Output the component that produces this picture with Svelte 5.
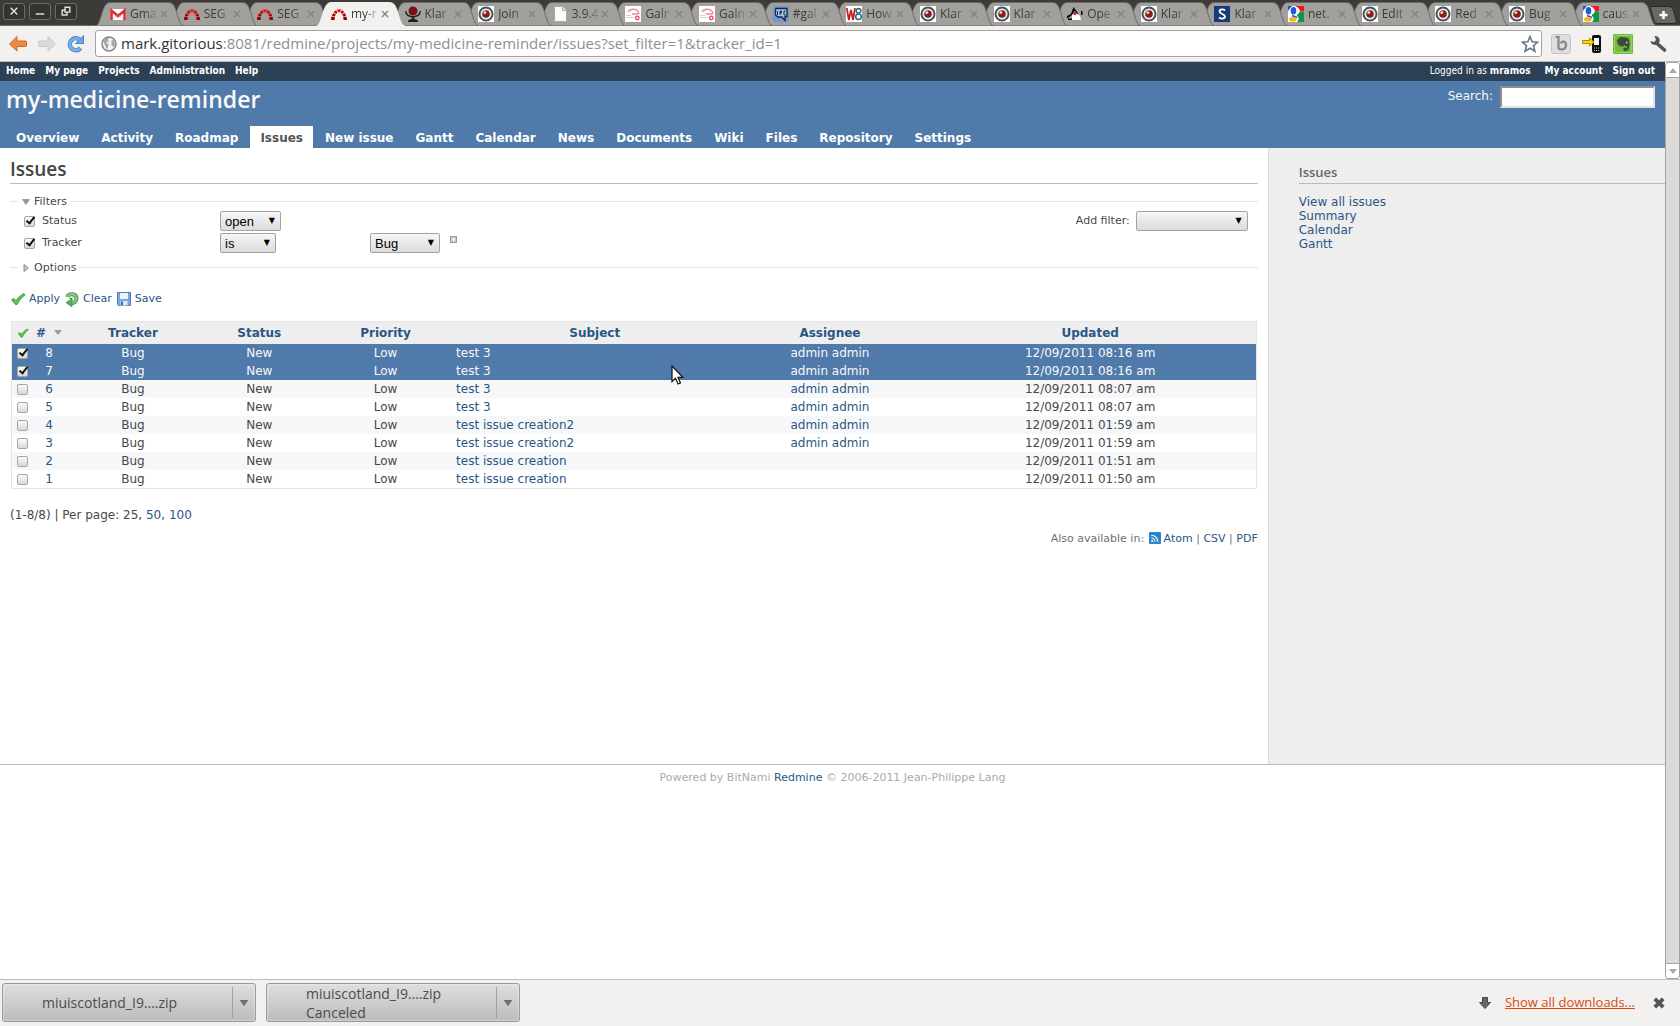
<script lang="ts">
	const tabs = [
		{ icon: 'gmail', title: 'Gma' },
		{ icon: 'redmine', title: 'SEG' },
		{ icon: 'redmine', title: 'SEG' },
		{ icon: 'redmine', title: 'my-r', active: true },
		{ icon: 'bowl', title: 'Klar' },
		{ icon: 'eye', title: 'Join' },
		{ icon: 'page', title: '3.9.4' },
		{ icon: 'galn', title: 'Galr' },
		{ icon: 'galn', title: 'Galn' },
		{ icon: 'irc', title: '#gal' },
		{ icon: 'w8', title: 'How' },
		{ icon: 'eye', title: 'Klar' },
		{ icon: 'eye', title: 'Klar' },
		{ icon: 'duke', title: 'Ope' },
		{ icon: 'eye', title: 'Klar' },
		{ icon: 'letter', title: 'Klar' },
		{ icon: 'google', title: 'net.' },
		{ icon: 'eye', title: 'Edit' },
		{ icon: 'eye', title: 'Red' },
		{ icon: 'eye', title: 'Bug' },
		{ icon: 'google', title: 'caus' }
	];

	const topMenu = ['Home', 'My page', 'Projects', 'Administration', 'Help'];
	const mainMenu = [
		'Overview', 'Activity', 'Roadmap', 'Issues', 'New issue', 'Gantt', 'Calendar',
		'News', 'Documents', 'Wiki', 'Files', 'Repository', 'Settings'
	];
	const sidebarLinks = ['View all issues', 'Summary', 'Calendar', 'Gantt'];
	const columns = ['Tracker', 'Status', 'Priority', 'Subject', 'Assignee', 'Updated'];

	let issues = $state([
		{ id: 8, subject: 'test 3', assignee: 'admin admin', updated: '12/09/2011 08:16 am', selected: true },
		{ id: 7, subject: 'test 3', assignee: 'admin admin', updated: '12/09/2011 08:16 am', selected: true },
		{ id: 6, subject: 'test 3', assignee: 'admin admin', updated: '12/09/2011 08:07 am', selected: false },
		{ id: 5, subject: 'test 3', assignee: 'admin admin', updated: '12/09/2011 08:07 am', selected: false },
		{ id: 4, subject: 'test issue creation2', assignee: 'admin admin', updated: '12/09/2011 01:59 am', selected: false },
		{ id: 3, subject: 'test issue creation2', assignee: 'admin admin', updated: '12/09/2011 01:59 am', selected: false },
		{ id: 2, subject: 'test issue creation', assignee: '', updated: '12/09/2011 01:51 am', selected: false },
		{ id: 1, subject: 'test issue creation', assignee: '', updated: '12/09/2011 01:50 am', selected: false }
	]);

	let statusOn = $state(true);
	let trackerOn = $state(true);
</script>

{#snippet favicon(name: string)}
	<svg class="favicon" viewBox="0 0 16 16" aria-hidden="true">
		{#if name === 'gmail'}
			<rect y="3" width="16" height="11" rx="1" fill="#fff" />
			<path d="M1.500 14V4.500L8 10l6.500-5.500V14" fill="none" stroke="#d93030" stroke-width="2.600" />
			<path d="M3 13.500l3.500-4M13 13.500l-3.500-4" stroke="#ddb0b0" stroke-width="0.800" />
		{:else if name === 'redmine'}
			<path d="M0.300 10.800h3.400V14H0zM12.300 10.800h3.400L16 14h-3.500z" fill="#9c0000" />
			<path d="M0.800 10l1.400-3 2.600 1.600L3.900 10.300zM15.200 10l-1.400-3-2.600 1.600.9 1.700z" fill="#b80000" />
			<path d="M2.700 6.200L5 4l1.400 2.600-1.200 1.300zM13.300 6.200L11 4 9.600 6.600l1.200 1.300z" fill="#d40000" />
			<path d="M5.800 3.600h4.400L9 6.200H7z" fill="#ec1010" />
		{:else if name === 'bowl'}
			<circle cx="8" cy="5" r="4.500" fill="#7c1010" />
			<path d="M0 4.500c0 5 4 7 8 7s8-2 8-7l-1.500 1C14 8.500 11 10 8 10S2 8.500 1.500 5.500z" fill="#222" />
			<path d="M7 11h2v1.500l4 2V16H3v-1.500l4-2z" fill="#222" />
		{:else if name === 'eye'}
			<rect width="16" height="16" fill="#fff" />
			<circle cx="8" cy="8" r="6.500" fill="#eef0f0" stroke="#44545c" stroke-width="2" />
			<circle cx="8" cy="8" r="3.800" fill="#8a1c1c" />
			<circle cx="6.800" cy="6.500" r="1.500" fill="#e8caca" />
		{:else if name === 'page'}
			<path d="M2.500 0.500h8l4 4v11h-12z" fill="#fbfbfb" stroke="#aaa" />
			<path d="M10.500 0.500v4h4" fill="#ddd" stroke="#aaa" />
		{:else if name === 'galn'}
			<rect width="16" height="16" fill="#fff" />
			<path d="M3 6C5 2.500 11 2 13.500 6c1 2-1 2-2.500 2H7" fill="none" stroke="#f28a96" stroke-width="1.400" />
			<path d="M1 11.500h8M1 9.500h5" stroke="#d5d5d5" />
			<circle cx="12.300" cy="12" r="1.700" fill="#fff" stroke="#ec5068" stroke-width="1.400" />
		{:else if name === 'irc'}
			<rect width="16" height="16" rx="3" fill="#6f98d4" />
			<path d="M3 2.500h11v8h-2v4L9 11H5L2.500 9V4z" fill="#adc6e8" stroke="#16263c" stroke-width="1.300" />
			<path d="M4.500 5v4M7 9V5h1.500v2H7M12.500 5H11v4h1.500" fill="none" stroke="#16263c" />
		{:else if name === 'w8'}
			<rect width="16" height="16" fill="#fff" />
			<path d="M0.800 2l2 12L5 4l2 10L9 2" fill="none" stroke="#c81818" stroke-width="1.700" />
			<circle cx="12.500" cy="4.800" r="2.300" fill="none" stroke="#227080" stroke-width="1.500" />
			<circle cx="12.500" cy="10.800" r="2.800" fill="none" stroke="#227080" stroke-width="1.500" />
		{:else if name === 'duke'}
			<path d="M7 2l6 8 1 4H5V9z" fill="#fff" />
			<path d="M6.500 1L12 8.500l-2-1L7.500 5 5 9l-4 3H0v-2l4-2zM1 12.500h4v1.500H1zM14 4.500l1.500 1V9H14z" fill="#000" />
			<circle cx="8" cy="7.500" r="1.700" fill="#d02020" />
		{:else if name === 'letter'}
			<rect width="16" height="16" fill="#173a78" />
			<path d="M11 4.500C9.500 3 5.500 3 5.500 5.500S11 8 11 10.500 7 13 5 11.500" fill="none" stroke="#fff" stroke-width="1.800" />
		{:else if name === 'google'}
			<rect width="16" height="16" fill="#fff" />
			<path d="M7 0h9v5.500h-4C12 3 10 1 7 0z" fill="#f01818" />
			<path d="M9 8.500c2-.5 2.500-2 2.500-3H16V16H9c2-2 2.500-4 0-6z" fill="#0c9646" />
			<path d="M0 0h4L1.500 3 0 5z" fill="#2058d0" />
			<ellipse cx="5.500" cy="4.800" rx="2.800" ry="3.800" fill="#2058d0" />
			<path d="M4 9.500l5 2" stroke="#2058d0" stroke-width="1.600" />
			<ellipse cx="4.800" cy="13.300" rx="3.800" ry="2.300" fill="#f8b418" />
		{/if}
	</svg>
{/snippet}

{#snippet tick()}
	<svg class="tick" viewBox="0 0 16 16" aria-hidden="true">
		<path d="M1.500 8.800L4 7.500l2 2.300C8 6.500 10.500 4.500 14 2.500l1 1.300C11.500 6.500 9 10 7 13.500H5.500z" fill="#5dc552" stroke="#37933a" stroke-width="0.900" />
	</svg>
{/snippet}

<div class="window">
	<header class="tabstrip">
		<div class="controls">
			<button aria-label="Close window"><svg viewBox="0 0 21 15"><path d="M7 4l7 7M14 4l-7 7" /></svg></button>
			<button aria-label="Minimize window"><svg viewBox="0 0 21 15"><path d="M6 10.500h9" stroke-width="2" /></svg></button>
			<button aria-label="Restore window"><svg viewBox="0 0 21 15"><path d="M9.500 3.500h5v5h-5zM9 6.500H6.500v5h5V9" /></svg></button>
		</div>
		<div class="tabs">
			{#each tabs as tab, i}
				<div class="tab" class:active={tab.active} style="z-index: {tab.active ? 30 : 21 - i}">
					<svg class="shape" viewBox="0 0 88 24" preserveAspectRatio="none" aria-hidden="true">
						<path d="M0 24C5 22 6 3 12 1Q13 0.500 15 0.500H73Q76 0.500 78 3C82 10 83 23 88 24z" />
					</svg>
					{@render favicon(tab.icon)}
					<span class="title">{tab.title}</span>
					<button class="close" aria-label="Close tab"><svg viewBox="0 0 8 8"><path d="M1 1l6 6M7 1L1 7" /></svg></button>
				</div>
			{/each}
		</div>
		<button class="newtab" aria-label="New tab">
			<svg viewBox="0 0 28 18" aria-hidden="true">
				<path d="M1 0.500H20Q23 0.500 24 3L27.500 15Q27.500 17.500 25 17.500H9Q6 17.500 5 15z" fill="#6a6964" stroke="#2b2a27" />
				<path d="M14.500 5v8M10.500 9h8" stroke="#fff" stroke-width="2.600" />
			</svg>
		</button>
	</header>

	<div class="toolbar">
		<button class="nav" aria-label="Back">
			<svg viewBox="0 0 20 20"><path d="M1.500 10L9 2.500V7h8.500q1 0 1 1v3.500q0 1-1 1H9V17z" fill="#f08a42" stroke="#cf6a25" /></svg>
		</button>
		<button class="nav" aria-label="Forward">
			<svg viewBox="0 0 20 20"><path d="M18.500 10L11 2.500V7H2.500q-1 0-1 1v3.500q0 1 1 1H11V17z" fill="#dcdad8" stroke="#cbc9c6" /></svg>
		</button>
		<button class="nav" aria-label="Reload">
			<svg viewBox="0 0 20 20"><path d="M14.500 14a6 6 0 1 1-1-8.500" fill="none" stroke="#4b86c6" stroke-width="4.500" /><path d="M17.500 1.500v8H9.500z" fill="#6fa8e2" stroke="#4b86c6" /><path d="M14.500 14a6 6 0 1 1-1-8.500" fill="none" stroke="#78aee5" stroke-width="2.800" /></svg>
		</button>
		<div class="omnibox">
			<svg class="globe" viewBox="0 0 16 16" aria-hidden="true">
				<circle cx="8" cy="8" r="7" fill="#f3f3f3" stroke="#858585" stroke-width="1.500" />
				<path d="M2 5.500c1.500-3 4-4 6-3.500L7 4l1 1.500-3 1 2.500 2L7 11l-.5 2.500C5 12.500 5 10.500 4 9zM10.500 4.500l2.500-.5 1 4-1.500 3.500-2-2.500z" fill="#a6a6a6" />
			</svg>
			<span class="url">mark.gitorious<span>:8081/redmine/projects/my-medicine-reminder/issues?set_filter=1&amp;tracker_id=1</span></span>
			<svg class="star" viewBox="0 0 18 18" aria-hidden="true">
				<path d="M9 1.500l2.200 5.200 5.500.4-4.200 3.600 1.400 5.500L9 13.200l-4.900 3 1.400-5.500L1.300 7.100l5.500-.4z" fill="#fff" stroke="#68728c" stroke-width="1.600" />
			</svg>
		</div>
		<div class="extensions">
			<button aria-label="Bitly">
				<svg viewBox="0 0 20 20"><rect x="0.500" y="0.500" width="19" height="19" rx="2" fill="#dedede" stroke="#c4c4c4" /><path d="M4.500 3h3v10q0 2.500 2.500 2.500c3.500 0 5-2 5-4.500 0-2-1-3.500-3-3.500L9.500 9" fill="none" stroke="#858585" stroke-width="2.200" /></svg>
			</button>
			<button aria-label="Send to phone">
				<svg viewBox="0 0 20 20"><rect x="10" y="1" width="9" height="18" rx="2" fill="#111" /><rect x="12" y="4" width="5" height="7" fill="#fff" /><path d="M12 14h5M12 16.500h5" stroke="#bbb" stroke-dasharray="1" /><path d="M0.500 6.500h7V4l4.500 4-4.500 4V9.500h-7z" fill="#ffd900" stroke="#ad8e00" /></svg>
			</button>
			<button aria-label="Evernote">
				<svg viewBox="0 0 20 20"><rect width="20" height="20" rx="1" fill="#6dbd3a" /><rect x="1.500" y="1.500" width="17" height="17" fill="none" stroke="#97d56c" /><path d="M4 6l3.500-3 4.500.5c3 0 4 1 4.500 4.500 0 5-.5 9-4 9-2.500 0-3-3.500-.5-3.500.5 0 1 .3 1 .8l1-.3c0-1.500-.5-2-1.500-2l-1-1c-.5 1-1.500 1.500-3 1.500C5.500 12.500 4 9.500 4 6z" fill="#3e4a3a" /><circle cx="13.800" cy="8.500" r="0.900" fill="#c5dbb6" /></svg>
			</button>
			<button aria-label="Settings">
				<svg viewBox="0 0 20 20"><path d="M9 9.500l7.500 6.500" stroke="#555" stroke-width="3.600" stroke-linecap="round" /><path d="M6.500 2c4-.5 6 3 5 6l-3 3c-3 .5-6-1-6-4l3.500 1 2-2z" fill="#555" /></svg>
			</button>
		</div>
	</div>

	<div class="viewport">
		<div class="page">
			<nav class="top-menu">
				<div>{#each topMenu as item}<a href="#top">{item}</a>{/each}</div>
				<div class="account">
					<span>Logged in as <a href="#user">mramos</a></span>
					<a href="#account">My account</a>
					<a href="#signout">Sign out</a>
				</div>
			</nav>

			<div class="header">
				<div class="project">
					<h1>my-medicine-reminder</h1>
					<form class="search">
						<label for="q">Search:</label>
						<input id="q" type="text" />
					</form>
				</div>
				<nav class="main-menu">
					{#each mainMenu as item}
						<a href="#menu" class:selected={item === 'Issues'}>{item}</a>
					{/each}
				</nav>
			</div>

			<div class="main">
				<main class="content">
					<h2>Issues</h2>
					<fieldset>
						<legend>
							<svg viewBox="0 0 8 8"><path d="M0.500 1.500h7L4 6.500z" fill="#999" stroke="#777" stroke-width="0.500" /></svg>Filters
						</legend>
						<div class="filters">
							<div class="filter-list">
								<div class="filter">
									<label class="field"><input type="checkbox" bind:checked={statusOn} />Status</label>
									<span class="select op-open"><select aria-label="Status operator"><option>open</option></select></span>
								</div>
								<div class="filter">
									<label class="field"><input type="checkbox" bind:checked={trackerOn} />Tracker</label>
									<span class="operator"><span class="select op-is"><select aria-label="Tracker operator"><option>is</option></select></span></span>
									<span class="select value"><select aria-label="Tracker value"><option>Bug</option></select></span>
									<button type="button" class="expand" aria-label="Multiple values">
										<svg viewBox="0 0 7 7"><rect x="0.500" y="0.500" width="6" height="6" fill="#ccc" stroke="#999" /><path d="M3.500 2v3M2 3.500h3" stroke="#fff" /></svg>
									</button>
								</div>
							</div>
							<div class="add-filter">
								<label for="add">Add filter:</label>
								<span class="select add"><select id="add"><option></option></select></span>
							</div>
						</div>
					</fieldset>
					<fieldset class="options">
						<legend>
							<svg viewBox="0 0 8 8"><path d="M2 0.500v7L6.500 4z" fill="#ccc" stroke="#777" stroke-width="0.800" /></svg>Options
						</legend>
					</fieldset>

					<p class="buttons">
						<a href="#apply">{@render tick()}Apply</a>
						<a href="#clear">
							<svg viewBox="0 0 16 16"><path d="M3.500 6C4 2 12.500 2 12.500 7.500c0 3-2.500 4.500-5 4.500" fill="none" stroke="#3f9346" stroke-width="4" /><path d="M3.500 6C4 2 12.500 2 12.500 7.500c0 3-2.500 4.500-5 4.500" fill="none" stroke="#86c886" stroke-width="2.400" /><path d="M2 11.500l6-3.500v8z" fill="#5baa5d" stroke="#3f9346" stroke-width="0.800" /><path d="M5.500 7.500h3" stroke="#3f9346" stroke-width="1.500" /></svg>Clear
						</a>
						<a href="#save">
							<svg viewBox="0 0 16 16"><path d="M1.500 1.500h13v13h-12l-1-1z" fill="#7aa7dd" stroke="#4a7ab8" /><path d="M4 2h8v6H4z" fill="#eef4fb" /><path d="M4.500 10h7v4.500h-7z" fill="#dce6f2" /><path d="M6 10.500v3.500" stroke="#3f6ca8" stroke-width="2" /></svg>Save
						</a>
					</p>

					<table>
						<colgroup>
							<col class="c-check" /><col class="c-id" /><col class="c-tracker" /><col class="c-status" />
							<col class="c-tracker" /><col class="c-subject" /><col class="c-assignee" /><col />
						</colgroup>
						<thead>
							<tr>
								<th>{@render tick()}</th>
								<th class="id"><a href="#sort">#</a><svg viewBox="0 0 8 5"><path d="M0 0h8L4 5z" fill="#999" /></svg></th>
								{#each columns as column}
									<th><a href="#sort">{column}</a></th>
								{/each}
							</tr>
						</thead>
						<tbody>
							{#each issues as issue (issue.id)}
								<tr class:marked={issue.selected}>
									<td class="check"><input type="checkbox" bind:checked={issue.selected} aria-label="Issue {issue.id}" /></td>
									<td><a href="#issue">{issue.id}</a></td>
									<td>Bug</td>
									<td>New</td>
									<td>Low</td>
									<td class="subject">
										<a href="#issue">{issue.subject}</a>
										{#if issue.id === 7}
											<svg class="pointer" viewBox="0 0 13 20" aria-hidden="true"><path d="M1 1v15.500l3.500-3.300 2.600 5.800 2.400-1.100-2.500-5.500h4.800z" fill="#fff" stroke="#111" stroke-width="1.200" /></svg>
										{/if}
									</td>
									<td><a href="#user">{issue.assignee}</a></td>
									<td>{issue.updated}</td>
								</tr>
							{/each}
						</tbody>
					</table>

					<p class="pagination">(1-8/8) | Per page: 25, <a href="#50">50</a>, <a href="#100">100</a></p>
					<p class="other-formats">
						Also available in:
						<a href="#atom" class="atom"><svg viewBox="0 0 13 13"><rect width="13" height="13" rx="1" fill="#2a86c8" /><path d="M2.500 6.500a4 4 0 0 1 4 4M2.500 3.500a7 7 0 0 1 7 7" fill="none" stroke="#fff" stroke-width="1.300" /><circle cx="3.500" cy="9.800" r="1.100" fill="#fff" /></svg>Atom</a>
						| <a href="#csv">CSV</a> | <a href="#pdf">PDF</a>
					</p>
				</main>
				<aside class="sidebar">
					<h3>Issues</h3>
					{#each sidebarLinks as link}
						<a href="#side">{link}</a>
					{/each}
				</aside>
			</div>

			<footer>Powered by BitNami <a href="#redmine">Redmine</a> © 2006-2011 Jean-Philippe Lang</footer>
		</div>
		<div class="scrollbar">
			<div class="arrow"><svg viewBox="0 0 8 5"><path d="M4 0l4 5H0z" fill="#aaa" /></svg></div>
			<div class="thumb"></div>
			<div class="arrow"><svg viewBox="0 0 8 5"><path d="M0 0h8L4 5z" fill="#aaa" /></svg></div>
		</div>
	</div>

	<div class="downloads">
		<div class="download">
			<button class="file">miuiscotland_I9….zip</button>
			<button class="more" aria-label="Download options"><svg viewBox="0 0 8 6"><path d="M0.500 0.500h7L4 5.500z" fill="#777" stroke="#666" /></svg></button>
		</div>
		<div class="download">
			<button class="file">miuiscotland_I9….zip<br />Canceled</button>
			<button class="more" aria-label="Download options"><svg viewBox="0 0 8 6"><path d="M0.500 0.500h7L4 5.500z" fill="#777" stroke="#666" /></svg></button>
		</div>
		<div class="show-all">
			<svg viewBox="0 0 12 12" aria-hidden="true"><path d="M3.500 0.500h5v5h3L6 11.500 0.500 5.500h3z" fill="#666" stroke="#444" /></svg>
			<a href="#downloads">Show all downloads...</a>
			<button aria-label="Close downloads bar"><svg viewBox="0 0 12 12"><path d="M1.800 1.800l8.400 8.400M10.200 1.800l-8.400 8.400" stroke="#555" stroke-width="3.800" /></svg></button>
		</div>
	</div>
</div>

<style>
	:global(body) {
		margin: 0;
		overflow: hidden;
	}

	.window {
		display: flex;
		flex-direction: column;
		height: 100vh;
		font-family: "DejaVu Sans", Verdana, sans-serif;
		font-size: 12px;
		color: #484848;
		background: #fff;
	}

	button {
		padding: 0;
		border: 0;
		background: none;
		font: inherit;
		color: inherit;
	}

	svg {
		display: block;
		flex: none;
	}

	a {
		color: #2a5685;
		text-decoration: none;
	}

	/* Browser tabs */
	.tabstrip {
		display: flex;
		flex: none;
		height: 26px;
		background: #3c3b37;
		box-shadow: inset 0 -1px #6b6a66;
	}

	.controls {
		display: flex;
		gap: 4px;
		width: 100px;
		padding: 3px 0 0 3px;
		box-sizing: border-box;
	}

	.controls button {
		box-sizing: border-box;
		width: 22px;
		height: 17px;
		border: 1px solid #6d6b66;
		border-radius: 3px;
		background: #34332f;
	}

	.controls path {
		fill: none;
		stroke: #e2e0dc;
		stroke-width: 1.5;
	}

	.tabs {
		display: flex;
		flex: 1;
		padding: 2px 0 0 3px;
	}

	.tab {
		position: relative;
		display: flex;
		flex: 1 1 0;
		align-items: center;
		min-width: 0;
		padding: 0 9px 0 7px;
		font-family: "Open Sans", "Noto Sans", sans-serif;
		font-size: 12px;
		line-height: 20px;
		color: #3c3b37;
	}

	.shape {
		position: absolute;
		top: 0;
		left: -7px;
		width: calc(100% + 14px);
		height: 24px;
		z-index: -1;
	}

	.shape path {
		fill: #a1a09d;
		stroke: #6b6a66;
	}

	.active .shape path {
		fill: #f2f1f0;
		stroke: #f2f1f0;
	}

	.favicon {
		width: 16px;
		height: 16px;
	}

	.title {
		flex: 1;
		margin-left: 4px;
		white-space: nowrap;
		mask-image: linear-gradient(to right, #000 45%, transparent 100%);
	}

	.close svg {
		width: 8px;
		height: 8px;
	}

	.close path {
		stroke: #83827f;
		stroke-width: 1.3;
	}

	.newtab {
		width: 31px;
		padding-top: 4px;
	}

	.newtab svg {
		width: 28px;
		height: 18px;
	}

	/* Browser toolbar */
	.toolbar {
		display: flex;
		flex: none;
		align-items: center;
		box-sizing: border-box;
		height: 36px;
		padding: 0 12px 0 8px;
		border-bottom: 1px solid #bdbcba;
		background: #f2f1f0;
	}

	.nav {
		width: 29px;
	}

	.nav svg {
		width: 20px;
		height: 20px;
	}

	.omnibox {
		display: flex;
		flex: 1;
		align-items: center;
		box-sizing: border-box;
		height: 27px;
		padding: 0 2px 0 5px;
		border: 1px solid #a3a29f;
		border-radius: 3px;
		background: #fff;
	}

	.globe {
		width: 16px;
		height: 16px;
	}

	.url {
		flex: 1;
		margin-left: 4px;
		padding-bottom: 2px;
		font-family: "Open Sans", "Noto Sans", sans-serif;
		font-size: 15px;
		color: #333;
	}

	.url span {
		color: #8f8f8f;
	}

	.star {
		width: 18px;
		height: 18px;
	}

	.extensions {
		display: flex;
		gap: 11px;
		margin-left: 9px;
	}

	.extensions svg {
		width: 20px;
		height: 20px;
	}

	.extensions button:last-child {
		margin-left: 4px;
	}

	/* Page */
	.viewport {
		display: flex;
		flex: 1;
		min-height: 0;
	}

	.page {
		flex: 1;
		min-width: 0;
		overflow: hidden;
	}

	.top-menu {
		display: flex;
		justify-content: space-between;
		height: 19px;
		padding: 0 10px 0 6px;
		background: #2c4056;
		color: #fff;
		font-family: "DejaVu Sans Condensed", "DejaVu Sans", sans-serif;
		font-size: 10px;
		line-height: 17px;
	}

	.top-menu a {
		color: #fff;
		font-weight: bold;
	}

	.top-menu div {
		display: flex;
		gap: 10px;
	}

	.account span {
		margin-right: 4px;
	}

	.header {
		background: #507aaa;
		color: #f8f8f8;
	}

	.project {
		display: flex;
		justify-content: space-between;
		height: 45px;
		padding: 0 10px 0 6px;
	}

	h1, h2, h3 {
		margin: 0;
		font-family: "Open Sans", "Trebuchet MS", sans-serif;
		font-weight: 600;
	}

	h1 {
		font-size: 23px;
		line-height: 36px;
	}

	.search {
		display: flex;
		gap: 7px;
		padding-top: 5px;
	}

	.search label {
		line-height: 20px;
	}

	.search input {
		box-sizing: border-box;
		width: 155px;
		height: 22px;
		border: 2px inset #e4e2e0;
		background: #fff;
	}

	.main-menu {
		display: flex;
		gap: 2px;
		padding-left: 6px;
	}

	.main-menu a {
		padding: 2px 10px 0;
		color: #fff;
		font-weight: bold;
		line-height: 20px;
	}

	.main-menu .selected {
		background: #fff;
		color: #555;
	}

	.main {
		display: flex;
		min-height: 616px;
		border-bottom: 1px solid #bbb;
		background: #eee;
	}

	.content {
		flex: 1;
		min-width: 0;
		padding: 0 10px;
		border-right: 1px solid #ddd;
		background: #fff;
	}

	h2 {
		padding-top: 7px;
		border-bottom: 1px solid #bbb;
		font-size: 19px;
		line-height: 28px;
		color: #444;
	}

	.sidebar {
		box-sizing: border-box;
		width: 23.8%;
		padding-left: 30px;
		line-height: 14px;
	}

	.sidebar a {
		display: block;
	}

	h3 {
		margin-bottom: 11px;
		padding: 14px 0 1px;
		border-bottom: 1px solid #bbb;
		font-size: 13px;
		line-height: 20px;
		color: #666;
	}

	fieldset {
		min-width: 0;
		margin: 9px 0 0;
		padding: 1px 10px 0 13px;
		border: 0 solid #e4e4e4;
		border-top-width: 1px;
		font-size: 11px;
	}

	legend {
		display: flex;
		align-items: center;
		gap: 4px;
		margin-left: -4px;
		padding: 0 3px;
		line-height: 17px;
	}

	legend svg {
		width: 8px;
		height: 8px;
	}

	.options {
		margin-top: 4px;
	}

	.filters {
		display: flex;
		justify-content: space-between;
		align-items: flex-start;
	}

	.filter {
		display: flex;
		height: 22px;
	}

	.field {
		display: flex;
		gap: 7px;
		width: 197px;
		line-height: 19px;
	}

	input[type="checkbox"] {
		position: relative;
		flex: none;
		width: 11px;
		height: 11px;
		margin: 0;
		border: 1px solid #a5a5a5;
		border-radius: 2px;
		background: linear-gradient(#fafafa, #d8d8d8);
		appearance: none;
		box-sizing: border-box;
	}

	.field input {
		margin: 5px 0 0 1px;
	}

	input[type="checkbox"]:checked::after {
		content: "";
		position: absolute;
		left: 3px;
		top: -2px;
		width: 3px;
		height: 7px;
		border: solid #111;
		border-width: 0 2px 2px 0;
		transform: rotate(38deg);
	}

	.select {
		position: relative;
		height: 20px;
	}

	.select::after {
		content: "▼";
		position: absolute;
		right: 6px;
		top: 0;
		font-size: 8px;
		line-height: 19px;
		color: #000;
		pointer-events: none;
	}

	select {
		display: block;
		width: 100%;
		height: 20px;
		padding: 0 4px;
		border: 1px solid #a3a3a3;
		border-radius: 2px;
		background: linear-gradient(#f6f6f6, #dcdcdc);
		appearance: none;
		font: 13px "Liberation Sans", Arial, sans-serif;
		color: #000;
	}

	.op-open {
		width: 61px;
	}

	.operator {
		width: 150px;
	}

	.op-is {
		display: block;
		width: 56px;
	}

	.value {
		width: 70px;
	}

	.expand {
		align-self: flex-start;
		margin: 3px 0 0 10px;
	}

	.expand svg {
		width: 7px;
		height: 7px;
	}

	.add-filter {
		display: flex;
		gap: 6px;
		line-height: 19px;
	}

	.add {
		width: 112px;
	}

	.buttons {
		display: flex;
		gap: 4px;
		margin: 13px 0;
		font-size: 11px;
		line-height: 18px;
	}

	.buttons a {
		display: flex;
		align-items: center;
		gap: 3px;
	}

	.buttons svg {
		width: 16px;
		height: 16px;
	}

	table {
		width: calc(100% - 2px);
		margin: 0 1px;
		border: 1px solid #e4e4e4;
		border-collapse: collapse;
		table-layout: fixed;
	}

	.c-check { width: 22px; }
	.c-id { width: 31px; }
	.c-tracker { width: 11%; }
	.c-status { width: 9.3%; }
	.c-subject { width: 22.6%; }
	.c-assignee { width: 15.2%; }

	th {
		height: 22px;
		padding: 0;
		background: #eee;
		line-height: 18px;
	}

	th .tick {
		width: 12px;
		height: 12px;
		margin: 0 auto;
	}

	.id svg {
		display: inline-block;
		width: 8px;
		height: 5px;
		margin-left: 8px;
		vertical-align: 2px;
	}

	.id {
		white-space: nowrap;
	}

	td {
		height: 18px;
		padding: 0;
		line-height: 18px;
		text-align: center;
	}

	.check input {
		display: block;
		margin: 0 auto;
	}

	.subject {
		position: relative;
		padding-left: 2px;
		text-align: left;
	}

	tbody tr:nth-child(odd) {
		background: #f6f7f8;
	}

	tbody .marked,
	tbody .marked:nth-child(odd) {
		background: #507aaa;
		color: #f8f8f8;
	}

	.marked a {
		color: #f8f8f8;
	}

	/* Mouse pointer over the selected rows */
	.pointer {
		position: absolute;
		left: 77%;
		top: 3px;
		z-index: 2;
		width: 13px;
		height: 20px;
	}

	.pagination {
		margin: 17px 0 8px;
		line-height: 18px;
	}

	.other-formats {
		margin: 0;
		font-size: 11px;
		line-height: 14px;
		text-align: right;
		color: #707070;
	}

	.atom svg {
		display: inline-block;
		width: 12px;
		height: 12px;
		margin: 0 3px 0 1px;
		vertical-align: -2px;
	}

	footer {
		padding-top: 5px;
		font-size: 11px;
		line-height: 16px;
		text-align: center;
		color: #aaa;
	}

	.scrollbar {
		display: flex;
		flex-direction: column;
		box-sizing: border-box;
		width: 15px;
		border: 1px solid #a3a3a0;
		border-radius: 3px;
		background: #fff;
	}

	.arrow {
		display: flex;
		align-items: center;
		justify-content: center;
		height: 14px;
	}

	.arrow svg {
		width: 8px;
		height: 5px;
	}

	.thumb {
		flex: 1;
		border: solid #a3a3a0;
		border-width: 1px 0;
		background: #dcdbda;
	}

	/* Downloads shelf */
	.downloads {
		display: flex;
		flex: none;
		gap: 10px;
		box-sizing: border-box;
		height: 47px;
		padding: 3px 15px 4px 2px;
		border-top: 1px solid #bdbcba;
		background: #f2f1f0;
		font-family: "Open Sans", "Noto Sans", sans-serif;
		font-size: 14px;
		line-height: 19px;
		color: #4c4c4c;
	}

	.download {
		display: flex;
		box-sizing: border-box;
		width: 254px;
		border: 1px solid #9a9a98;
		border-radius: 3px;
		background: linear-gradient(#dedede, #bcbcbc);
		box-shadow: inset 0 0 2px #fff;
	}

	.file {
		flex: 1;
		padding-left: 39px;
		text-align: left;
	}

	.more {
		display: flex;
		align-items: center;
		justify-content: center;
		width: 23px;
		margin: 3px 0;
		border-left: 1px solid #a2a2a2;
	}

	.more svg {
		width: 8px;
		height: 6px;
	}

	.show-all {
		display: flex;
		flex: 1;
		align-items: center;
		justify-content: flex-end;
	}

	.show-all svg {
		width: 12px;
		height: 12px;
	}

	.show-all a {
		margin: 0 18px 0 14px;
		font-size: 13px;
		color: #dd4814;
		text-decoration: underline;
	}
</style>
